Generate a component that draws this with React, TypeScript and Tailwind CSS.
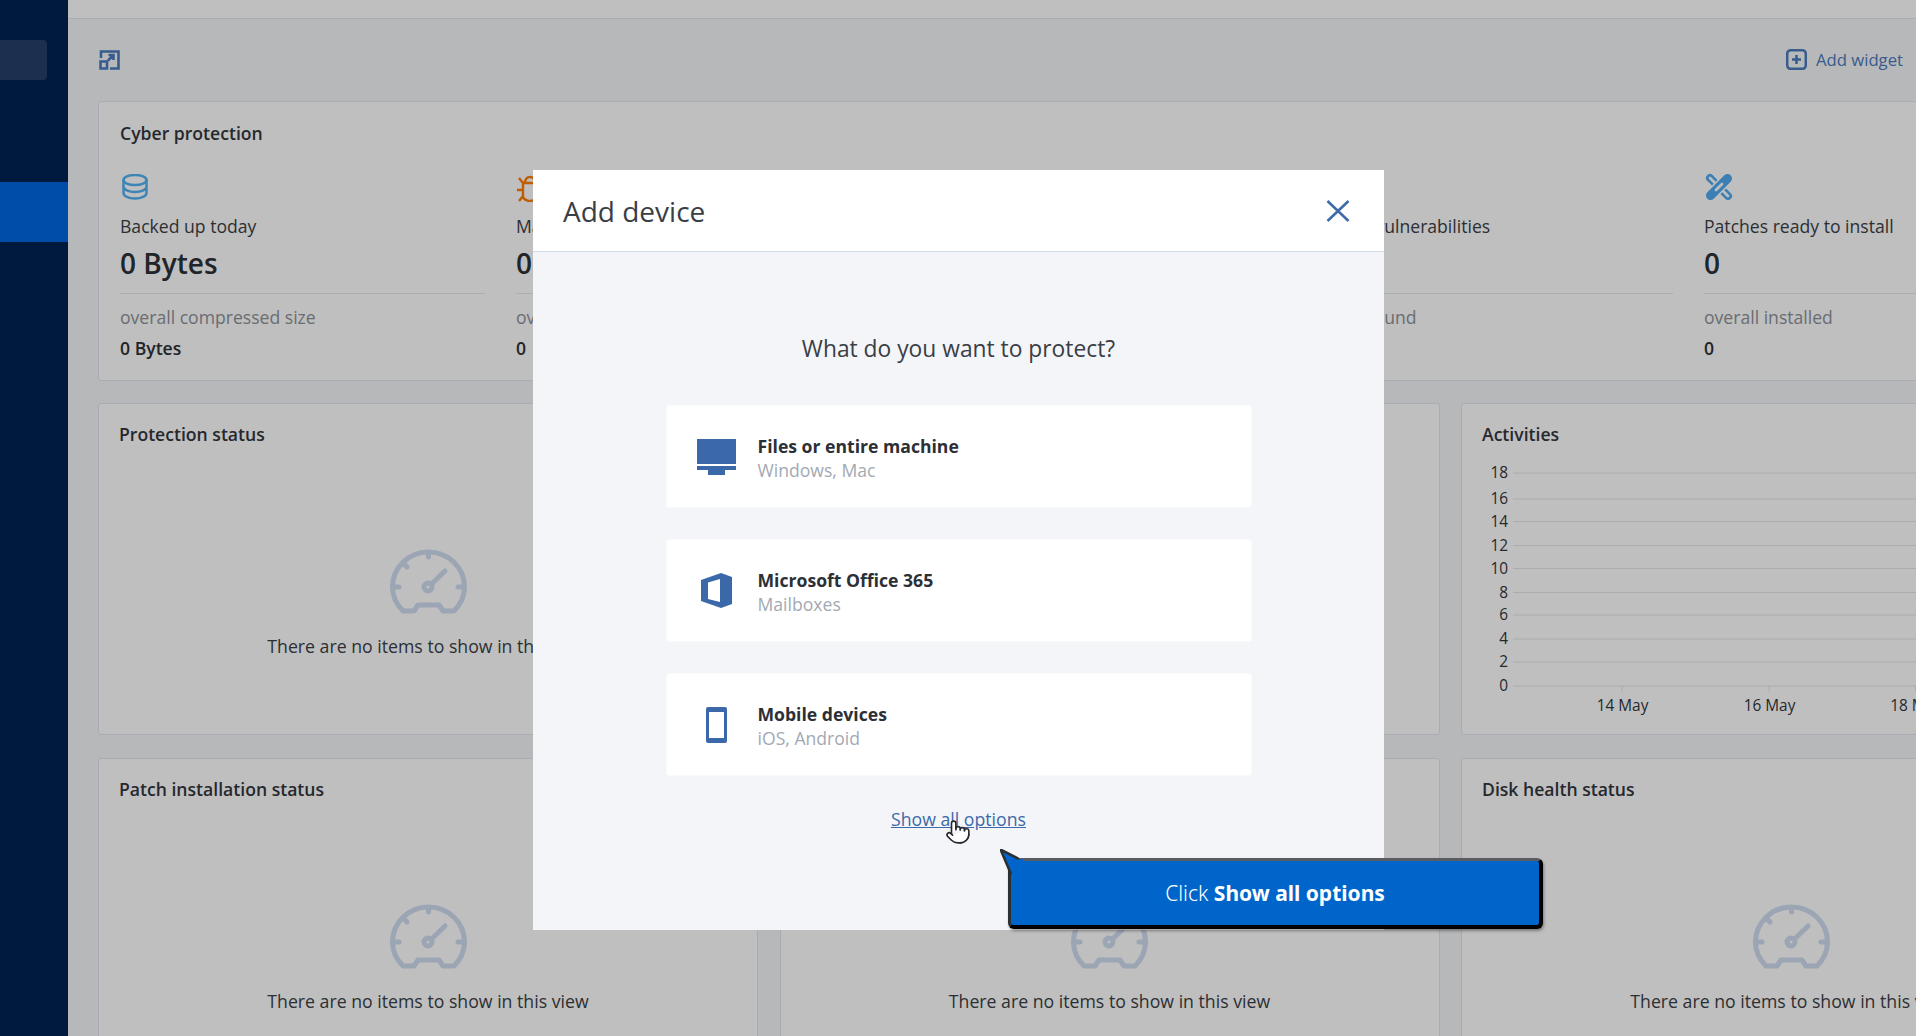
import React from 'react'
import { Pointer } from 'lucide-react'

const stats = [
  { icon: 'db', label: 'Backed up today', value: '0 Bytes', sub: 'overall compressed size', total: '0 Bytes' },
  { icon: 'bug', label: 'Malware blocked', value: '0', sub: 'overall blocked', total: '0' },
  { icon: 'url', label: 'Malicious URLs blocked', value: '0', sub: 'overall blocked', total: '0' },
  { icon: 'vuln', label: 'Existing vulnerabilities', value: '0', sub: 'overall found', total: '0' },
  { icon: 'patch', label: 'Patches ready to install', value: '0', sub: 'overall installed', total: '0' },
]

const Gauge = () => (
  <svg width="77" height="65" viewBox="0 0 77 65" fill="none" stroke="#cfdcf0" strokeWidth="5" strokeLinecap="round" strokeLinejoin="round">
    <path d="M13 62 C6 55 2.5 46 2.5 38 A36 35 0 0 1 74.5 38 C74.5 46 71 55 64 62 H53 L49 56 H28 L24 62 Z" />
    <path d="M38.5 4 V8 M14 15 L17 18 M3 38 H9 M68 38 H74 M41.5 35 L55 22" />
    <circle cx="38" cy="38" r="4" />
  </svg>
)

const StatIcon = ({ name }: { name: string }) => {
  if (name === 'db')
    return (
      <svg width="26" height="26" viewBox="0 0 26 26" fill="none" stroke="#55b0f5" strokeWidth="2.5" className="ml-[2px]">
        <ellipse cx="13" cy="6" rx="11.5" ry="5" />
        <path d="M1.5 6 V19 C1.5 22 6.5 24.5 13 24.5 C19.5 24.5 24.5 22 24.5 19 V6 M1.5 12.5 C1.5 15.5 6.5 18 13 18 C19.5 18 24.5 15.5 24.5 12.5" />
      </svg>
    )
  if (name === 'bug')
    return (
      <svg width="26" height="28" viewBox="0 0 26 28" fill="none" stroke="#ff7d05" strokeWidth="2.4">
        <path d="M7 9 H21 V22 C21 25 17 27 14 27 C11 27 7 25 7 22 Z M9 9 C9 5 11 3 14 3 C17 3 19 5 19 9 M7 9 L3 4 M7 16 H1 M7 22 L3 27" />
      </svg>
    )
  if (name === 'patch')
    return (
      <svg width="30" height="30" viewBox="0 0 30 30" fill="none" strokeLinecap="round" className="-mt-[2px]">
        <path d="M6 6 L24 24" stroke="#50aaf2" strokeWidth="8" />
        <path d="M6 6 L24 24" stroke="#ffffff" strokeWidth="2.6" />
        <path d="M6.5 23.5 L23.5 6.5" stroke="#ffffff" strokeWidth="12" />
        <path d="M6.5 23.5 L23.5 6.5" stroke="#50aaf2" strokeWidth="9" />
        <path d="M12 18 L18 12" stroke="#ffffff" strokeWidth="2.6" />
      </svg>
    )
  return <div className="w-[26px] h-[26px]" />
}

const ticks = [18, 16, 14, 12, 10, 8, 6, 4, 2, 0]
const tickY = [13, 39, 61.5, 85.5, 108.5, 132.5, 155, 179, 202, 226]
const dates = [
  { x: 140, t: '14 May' },
  { x: 287, t: '16 May' },
  { x: 433.5, t: '18 May' },
  { x: 580, t: '20 May' },
]

const ActivitiesChart = () => (
  <svg width="618" height="260" className="mt-[14px] text-[15.4px]">
    {ticks.map((t, i) => (
      <g key={t}>
        <line x1="31" x2="618" y1={tickY[i]} y2={tickY[i]} stroke="#e3e6ec" />
        <text x="26" y={tickY[i] + 5} textAnchor="end" fill="#32363c">{t}</text>
      </g>
    ))}
    {dates.map((d) => (
      <g key={d.t}>
        <line x1={d.x} x2={d.x} y1="226" y2="232" stroke="#e3e6ec" />
        <text x={d.x + 0.5} y="251" textAnchor="middle" fill="#32363c">{d.t}</text>
      </g>
    ))}
  </svg>
)

const EmptyState = () => (
  <div className="flex flex-col items-center mt-[103px]">
    <Gauge />
    <p className="mt-[20px] text-[17.7px] leading-6 whitespace-nowrap text-[#3a3e45]">There are no items to show in this view</p>
  </div>
)

const Panel = ({ title, children }: { title: string; children?: React.ReactNode }) => (
  <div className="bg-white border border-[#e2e6ee] rounded-[3px] px-[20px] pt-[18px] min-w-0">
    <h3 className="text-[17.6px] leading-6 font-semibold text-[#32363c]">{title}</h3>
    {children}
  </div>
)

const OptionCard = ({ icon, title, sub }: { icon: React.ReactNode; title: string; sub: string }) => (
  <div className="w-[586px] h-[103px] bg-white border border-[#f9fafc] rounded-[3px] flex items-center pl-[30px] mb-[31px] shrink-0">
    <div className="w-[40px] flex justify-center mr-[21px]">{icon}</div>
    <div className="pt-[3px]">
      <div className="text-[17.6px] leading-6 font-bold text-[#2c3036]">{title}</div>
      <div className="text-[17.6px] leading-6 text-[#a3a9b3]">{sub}</div>
    </div>
  </div>
)

export default function App() {
  return (
    <div className="relative h-screen w-full overflow-hidden flex bg-[#f5f6f8] font-['Open_Sans','Noto_Sans',sans-serif]">
      <aside className="w-[68px] shrink-0 bg-[#002352] pt-[40px]">
        <div className="w-[47px] h-[40px] rounded-r-[4px] bg-[#263f68]" />
        <div className="mt-[102px] h-[60px] bg-[#0067e0]" />
      </aside>

      <main className="flex-1 min-w-0">
        <div className="h-[19px] bg-white border-b border-[#dfe4ee]" />
        <div className="h-[82px] pl-[31px] pr-[13px] flex items-center justify-between">
          <svg width="21" height="20" viewBox="0 0 21 20" fill="none" stroke="#4a7bbd" strokeWidth="2.6">
            <path d="M2 8 V1.5 H19.5 V18.5 H11 M1.5 11.5 H8 V18.5 H1.5 Z M9 10.5 L14.5 5 M9.5 5 H14.5 V10" />
          </svg>
          <div className="flex items-center gap-[9px] text-[16.7px] text-[#4a7bbd]">
            <svg width="21" height="21" viewBox="0 0 21 21" fill="none" stroke="#4a7bbd" strokeWidth="2.5">
              <rect x="1.2" y="1.2" width="18.6" height="18.6" rx="3.5" />
              <path d="M10.5 6 V15 M6 10.5 H15" />
            </svg>
            Add widget
          </div>
        </div>

        <div className="w-[2023px] ml-[30px] flex flex-col gap-[22px]">
          <div className="h-[280px] bg-white border border-[#e2e6ee] rounded-[3px] pl-[21px] pt-[19px]">
            <h3 className="text-[17.6px] leading-6 font-semibold text-[#32363c]">Cyber protection</h3>
            <div className="mt-[29px] grid grid-cols-[repeat(5,365px)] gap-[31px]">
              {stats.map((s) => (
                <div key={s.label}>
                  <div className="h-[28px] flex"><StatIcon name={s.icon} /></div>
                  <div className="mt-[12px] text-[17.6px] leading-6 text-[#3a3e45]">{s.label}</div>
                  <div className="mt-[7px] text-[28px] leading-[36px] font-semibold text-[#2c3036]">{s.value}</div>
                  <div className="mt-[12px] border-t border-[#e2e6ee] pt-[11px] text-[17.6px] leading-6 text-[#8d9299]">{s.sub}</div>
                  <div className="mt-[7px] text-[17.6px] leading-6 font-semibold text-[#2c3036]">{s.total}</div>
                </div>
              ))}
            </div>
          </div>

          <div className="grid grid-cols-3 gap-[21.5px] h-[332px]">
            <Panel title="Protection status"><EmptyState /></Panel>
            <Panel title="Active alerts summary"><EmptyState /></Panel>
            <Panel title="Activities"><ActivitiesChart /></Panel>
          </div>

          <div className="grid grid-cols-3 gap-[21.5px] h-[332px] mt-px">
            <Panel title="Patch installation status"><EmptyState /></Panel>
            <Panel title="Missing updates by categories"><EmptyState /></Panel>
            <Panel title="Disk health status"><EmptyState /></Panel>
          </div>
        </div>
      </main>

      {/* dimmed backdrop + dialog */}
      <div className="absolute inset-0 bg-black/25 flex justify-center pt-[170px]">
        <div className="relative ml-[1px] w-[851px] h-[760px] bg-[#f4f5f8] flex flex-col">
          <div className="h-[82px] shrink-0 bg-white border-b border-[#d3dbe8] flex items-center justify-between pl-[30px] pr-[34px]">
            <h2 className="text-[28px] text-[#3a3e45]">Add device</h2>
            <svg width="24" height="24" viewBox="0 0 24 24" fill="none" stroke="#3f6ca9" strokeWidth="2.6">
              <path d="M1.5 2 L22.5 22 M22.5 2 L1.5 22" />
            </svg>
          </div>

          <div className="flex flex-col items-center pt-[81px]">
            <p className="text-[22.8px] leading-8 text-[#3a3e45] mb-[40px]">What do you want to protect?</p>
            <OptionCard
              title="Files or entire machine"
              sub="Windows, Mac"
              icon={
                <svg width="39" height="36" viewBox="0 0 39 36" fill="#3a68a9">
                  <path d="M0 0 H39 V25 H0 Z M0 27 H39 V31 H28 V36 H11 V31 H0 Z" />
                </svg>
              }
            />
            <OptionCard
              title="Microsoft Office 365"
              sub="Mailboxes"
              icon={
                <svg width="31" height="35" viewBox="0 0 31 35" fill="#3a68a9" fillRule="evenodd">
                  <path d="M0 7 L20 0 L31 4 V31 L20 35 L0 28 Z M7 9.5 L19 6 V29 L7 26 Z" />
                </svg>
              }
            />
            <OptionCard
              title="Mobile devices"
              sub="iOS, Android"
              icon={
                <svg width="21" height="36" viewBox="0 0 21 36" fill="#3a68a9" fillRule="evenodd">
                  <path d="M2 0 H19 A2 2 0 0 1 21 2 V34 A2 2 0 0 1 19 36 H2 A2 2 0 0 1 0 34 V2 A2 2 0 0 1 2 0 Z M3 5 V31 H18 V5 Z" />
                </svg>
              }
            />
            <a className="text-[17.7px] leading-6 text-[#3b6aa8] underline">Show all options</a>
          </div>

          <Pointer className="absolute left-[412px] top-[647px] w-[26px] h-[30px] fill-white text-[#26282c]" strokeWidth={1.5} />
        </div>
      </div>

      {/* tutorial callout */}
      <div className="absolute left-[1000px] top-[849px] w-[544px] h-[81px]">
        <div className="absolute left-[8px] top-[9px] w-[535px] h-[71px] pt-[1px] bg-[#0065ca] rounded-[6px] border-t-[3px] border-l-[3px] border-r-[4px] border-b-[4px] border-t-[#595c60] border-l-[#2c2f33] border-r-black border-b-black shadow-[1px_2px_3px_rgba(0,0,0,0.35)] flex items-center justify-center text-white text-[21px] font-['Noto_Sans',sans-serif]">
          <span className="font-light">Click&nbsp;</span><b className="font-bold">Show all options</b>
        </div>
        <svg width="24" height="28" viewBox="0 0 24 28" className="absolute left-0 top-0">
          <path d="M0.5 0.5 L19 10 H23 V14 H11 V25 Z" fill="#0065ca" />
          <path d="M11 25 L0.5 0.5 L19 10" fill="none" stroke="#2c2f33" strokeWidth="2.5" />
        </svg>
      </div>
    </div>
  )
}
